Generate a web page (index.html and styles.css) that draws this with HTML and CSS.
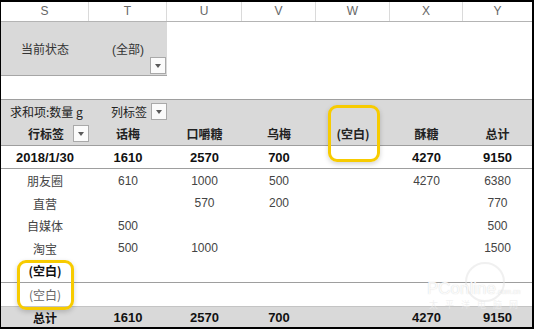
FILE: index.html
```html
<!DOCTYPE html>
<html lang="zh">
<head>
<meta charset="utf-8">
<link rel="stylesheet" href="styles.css">
</head>
<body>
<div class="frame">
  <div class="row colheads">
    <div>S</div><div>T</div><div>U</div><div>V</div><div>W</div><div>X</div><div>Y</div>
  </div>
  <div class="slicer">
    <div class="scell">当前状态</div>
    <div class="scell">(全部)<span class="dd dd-slicer"></span></div>
  </div>
  <div class="spacer"></div>
  <div class="pivot-head">
    <div class="row h1">
      <div class="left">求和项:数量 g</div>
      <div class="collabel">列标签<span class="dd"></span></div>
      <div></div><div></div><div></div><div></div><div></div>
    </div>
    <div class="row h2">
      <div class="rowlabel">行标签<span class="dd"></span></div>
      <div>话梅</div><div>口嚼糖</div><div>乌梅</div><div>(空白)</div><div>酥糖</div><div>总计</div>
    </div>
  </div>
  <div class="row grp bold">
    <div>2018/1/30</div><div>1610</div><div>2570</div><div>700</div><div></div><div>4270</div><div>9150</div>
  </div>
  <div class="row d r23"><div>朋友圈</div><div>610</div><div>1000</div><div>500</div><div></div><div>4270</div><div>6380</div></div>
  <div class="row d r22"><div>直营</div><div></div><div>570</div><div>200</div><div></div><div></div><div>770</div></div>
  <div class="row d r23"><div>自媒体</div><div>500</div><div></div><div></div><div></div><div></div><div>500</div></div>
  <div class="row d r22"><div>淘宝</div><div>500</div><div>1000</div><div></div><div></div><div></div><div>1500</div></div>
  <div class="row d r23 grpb"><div class="boldtxt">(空白)</div><div></div><div></div><div></div><div></div><div></div><div></div></div>
  <div class="row d r23"><div class="light">(空白)</div><div></div><div></div><div></div><div></div><div></div><div></div></div>
  <div class="row total bold"><div>总计</div><div>1610</div><div>2570</div><div>700</div><div></div><div>4270</div><div>9150</div></div>

  <div class="hl hl-w"></div>
  <div class="hl hl-s"></div>

  <div class="watermark">
    <div class="wm-ring"></div>
    <div class="wm-logo">PConline<span class="wm-small">.com.cn</span></div>
    <div class="wm-cn">太平洋电脑网</div>
  </div>
</div>
</body>
</html>
```
FILE: styles.css
```css
* { box-sizing: border-box; }
html, body { margin: 0; padding: 0; background: #fff; }
body {
  width: 534px;
  height: 329px;
  overflow: hidden;
  font-family: "Liberation Sans", "Noto Sans CJK SC", sans-serif;
  font-size: 12px;
  color: #333;
}
.frame {
  position: relative;
  width: 534px;
  height: 329px;
  border-top: 2px solid #000;
  border-left: 1px solid #000;
  border-right: 2px solid #000;
  border-bottom: 2px solid #000;
  overflow: hidden;
}
.row {
  display: grid;
  grid-template-columns: 88px 78px 75px 74px 74px 73px 1fr;
  align-items: center;
}
.row > div {
  text-align: center;
  white-space: nowrap;
}
.colheads {
  height: 20px;
  border-bottom: 1px solid #b4b4b4;
  color: #666;
  font-size: 12px;
  font-family: "Liberation Sans", sans-serif;
}
.colheads > div {
  height: 19px;
  line-height: 19px;
  border-right: 1px solid #dadada;
}
.colheads > div:last-child { border-right: 0; }

.slicer {
  width: 166px;
  height: 54px;
  background: #d9d9d9;
  border-bottom: 1px solid #a6a6a6;
  display: grid;
  grid-template-columns: 88px 78px;
  align-items: center;
}
.scell {
  position: relative;
  height: 53px;
  display: flex;
  align-items: center;
  justify-content: center;
  color: #333;
}
.spacer { height: 23px; }

.pivot-head {
  background: #d9d9d9;
  border-top: 1px solid #9e9e9e;
  border-bottom: 1px solid #9e9e9e;
  font-family: "Noto Sans CJK SC", sans-serif;
  color: #222;
}
.h1 { height: 22px; }
.h2 { height: 23px; font-weight: bold; }
.h1 .left {
  text-align: left;
  padding-left: 9px;
  overflow: visible;
}
.collabel, .rowlabel {
  position: relative;
  height: 100%;
  display: flex;
  align-items: center;
}
.collabel { justify-content: flex-start; padding-left: 22px; }
.rowlabel { justify-content: flex-start; padding-left: 27px; }

.dd {
  position: absolute;
  width: 16px;
  height: 17px;
  background: #fbfbfb;
  border: 1px solid #a9a9a9;
}
.dd::after {
  content: "";
  position: absolute;
  left: 4px;
  top: 6px;
  border-left: 3.5px solid transparent;
  border-right: 3.5px solid transparent;
  border-top: 4px solid #5a5a5a;
}
.dd-slicer { right: 1px; bottom: 1px; }
.collabel .dd { right: 0; top: 3px; }
.rowlabel .dd { left: 72px; top: 3px; }

.grp {
  height: 23px;
  border-bottom: 1px solid #9e9e9e;
  color: #111;
}
.bold { font-weight: bold; font-size: 13px; }
.grp > div:first-child, .total > div:first-child { font-size: 13px; }

.d { color: #444; }
.d > div:first-child { font-family: "Noto Sans CJK SC", sans-serif; }
.r22 { height: 22px; }
.r23 { height: 23px; }
.grpb { border-bottom: 1px solid #9e9e9e; height: 24px; }
.boldtxt { font-weight: bold; color: #111; }
.light { color: #666; }

.total {
  height: 22px;
  background: #d9d9d9;
  border-top: 1px solid #c4c4c4;
  color: #111;
}
.total > div:first-child { font-family: "Noto Sans CJK SC", sans-serif; font-size: 12px; }
.h2 > div { font-family: "Noto Sans CJK SC", sans-serif; }

.hl {
  position: absolute;
  border: 3px solid #f7cb00;
  border-radius: 9px;
  box-shadow: 0 2px 5px rgba(0,0,0,0.18);
}
.hl-w { left: 327px; top: 103px; width: 52px; height: 57px; }
.hl-s { left: 16px; top: 258px; width: 57px; height: 50px; }

.watermark {
  position: absolute;
  left: 424px;
  top: 264px;
  width: 106px;
  height: 44px;
  pointer-events: none;
}
.wm-ring {
  position: absolute;
  left: 40px;
  top: -4px;
  width: 40px;
  height: 40px;
  border-radius: 50%;
  border: 2px solid rgba(225,225,225,0.5);
}
.wm-logo {
  position: absolute;
  left: 2px;
  top: 14px;
  font-family: "Liberation Sans", sans-serif;
  font-size: 17px;
  line-height: 17px;
  letter-spacing: 0;
  color: rgba(255,255,255,0.9);
  text-shadow: 0 0 1px rgba(150,150,150,0.45);
}
.wm-small { font-size: 7px; line-height: 7px; letter-spacing: 0; }
.wm-cn {
  position: absolute;
  left: 4px;
  top: 34px;
  font-family: "Noto Sans CJK SC", sans-serif;
  font-size: 9px;
  line-height: 9px;
  letter-spacing: 7px;
  color: rgba(235,235,235,0.7);
}
```
